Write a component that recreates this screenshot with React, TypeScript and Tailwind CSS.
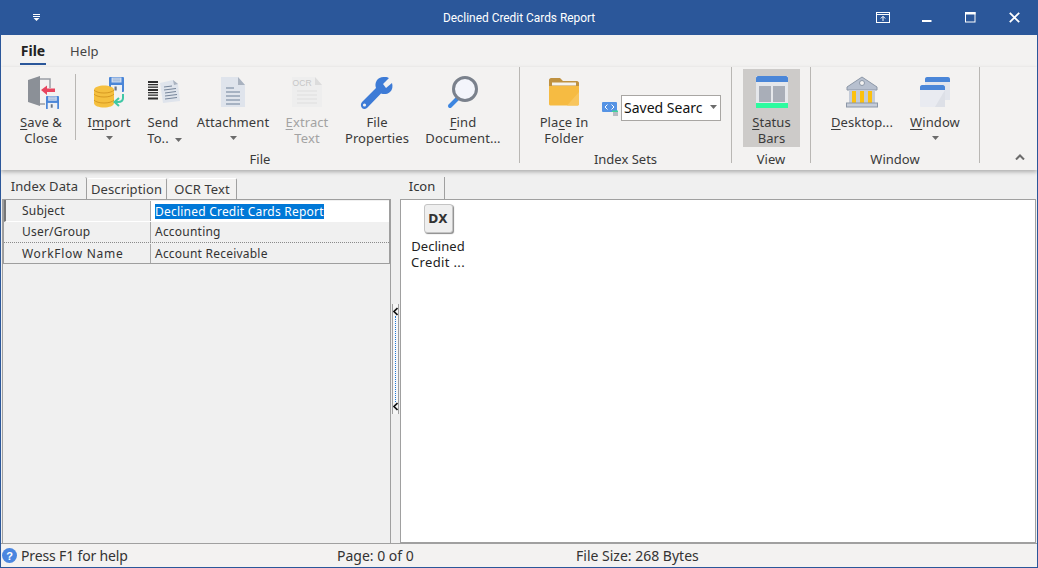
import React from "react";

const Sep = () => <div className="h-[96px] w-[1px] shrink-0 bg-[#b9b7b4]" />;

function Floppy({ x, y, s }: { x: number; y: number; s: number }) {
  const k = s / 15;
  return (
    <g transform={`translate(${x} ${y}) scale(${k})`}>
      <rect x="0" y="0" width="15" height="15" rx="1" fill="#4a86d8" />
      <rect x="2.5" y="0.5" width="10" height="5" fill="#c9d8ee" />
      <path d="M4 2 H11 M4 3.8 H11" stroke="#8ea9cf" strokeWidth="0.7" />
      <rect x="2" y="8" width="11" height="7" fill="#eef1f5" />
      <rect x="5.5" y="9.5" width="2.2" height="4" fill="#6d7683" />
    </g>
  );
}

function Icon({ name }: { name: string }) {
  const common = { width: 40, height: 40, viewBox: "0 0 40 40" };
  switch (name) {
    case "save":
      return (
        <svg {...common}>
          <path d="M7 8 L19 4 V34 L7 30 Z" fill="#8b9097" />
          <path d="M19 7 H29 V16" fill="none" stroke="#9a9ea5" strokeWidth="1.5" />
          <path d="M19 32 H24" fill="none" stroke="#9a9ea5" strokeWidth="1.5" />
          <path d="M20 18 L26 13.5 V16.5 H34 V20 H26 V23 Z" fill="#e8455f" />
          <Floppy x={25} y={24} s={13} />
        </svg>
      );
    case "import":
      return (
        <svg {...common}>
          <Floppy x={20} y={5} s={15} />
          <path d="M5 18 C5 12 25 12 25 18 V31 C25 37 5 37 5 31 Z" fill="#f5c03f" />
          <path d="M5 22 C8 26 22 26 25 22 M5 28 C8 32 22 32 25 28 M5 18 C8 22 22 22 25 18" fill="none" stroke="#d79a22" strokeWidth="1" />
          <path d="M34 22 V26 C34 29 32 30 29 30 H27" fill="none" stroke="#3fc7a5" strokeWidth="2" />
          <path d="M30 26 L25.5 30 L30 34" fill="none" stroke="#3fc7a5" strokeWidth="2" />
        </svg>
      );
    case "send":
      return (
        <svg {...common}>
          {[9, 12, 14.5, 17, 20, 22.5, 25.5].map((y, i) => (
            <rect key={i} x="5" y={y} width="10" height={i % 3 === 0 ? 2 : 1.3} fill="#2f2f2f" />
          ))}
          <path d="M17 11 L30 8 L35 12 L37 29 L20 31 Z" fill="#dfe4ec" />
          <path d="M30 8 L35 12 L31 13 Z" fill="#a9b2bf" />
          <path d="M21 15 L29 14 M21 18 L33 16.5 M22 21 L33 19.5 M22 24 L34 22.5 M22 27 L34 25.5" stroke="#76859a" strokeWidth="1" />
        </svg>
      );
    case "attach":
      return (
        <svg {...common}>
          <path d="M8 5 H25 L32 13 V35 H8 Z" fill="#dfe4ec" />
          <path d="M25 5 L32 13 H25 Z" fill="#a9b2bf" />
          <path d="M13 16 H21 M13 20 H27 M13 24 H27 M13 28 H27 M13 32 H27" stroke="#6f8097" strokeWidth="1.2" />
        </svg>
      );
    case "ocr":
      return (
        <svg {...common}>
          <path d="M5 5 H28 L35 13 V35 H5 Z" fill="#eeeeee" />
          <path d="M28 5 L35 13 H28 Z" fill="#dcdcdc" />
          <text x="5.5" y="14" fontSize="8.5" fill="#c6c6c6" fontFamily="Liberation Sans, sans-serif">OCR</text>
          <path d="M10 19 H30 M10 23 H30 M10 27 H30 M10 31 H30" stroke="#dedede" strokeWidth="1.2" />
        </svg>
      );
    case "wrench":
      return (
        <svg {...common}>
          <path d="M5 30 L19 16 C17 10 21 4 28 5 C30 5 31 5.5 32 6 L26 12 L29 16 L35 11 C36 14 35.5 18 33 20 C30 22.5 27 22.5 24 21.5 L10 36 C8 37.5 6 37 5 36 C3.5 34 3.5 32 5 30 Z" fill="#3d7bd6" />
          <circle cx="7.5" cy="33" r="1.6" fill="#f3f2f1" />
        </svg>
      );
    case "find":
      return (
        <svg {...common}>
          <path d="M14 27 L7 34" stroke="#3d86e0" strokeWidth="4" strokeLinecap="round" />
          <circle cx="22" cy="17" r="11.5" fill="#f3f5fb" stroke="#7a818c" strokeWidth="3" />
        </svg>
      );
    case "folder":
      return (
        <svg {...common}>
          <path d="M5 8 C5 7 6 6 7 6 H16 L19 9 H33 C34 9 35 10 35 11 V16 H5 Z" fill="#bf9140" />
          <rect x="8" y="10.5" width="24" height="3" fill="#f5f3ee" />
          <path d="M5 14 H35 V32 C35 33 34 33.5 33 33.5 H7 C6 33.5 5 33 5 32 Z" fill="#f6bb42" />
          <path d="M23 33.5 L35 20 V32 C35 33 34 33.5 33 33.5 Z" fill="#f8c55c" />
        </svg>
      );
    case "status":
      return (
        <svg {...common}>
          <rect x="4" y="4" width="32" height="32" fill="#e5e7eb" />
          <path d="M4 6 C4 5 5 4 6 4 H34 C35 4 36 5 36 6 V10 H4 Z" fill="#4a86d8" />
          <rect x="7" y="14" width="12" height="16" fill="#a9aeb8" />
          <rect x="21" y="14" width="12" height="16" fill="#a9aeb8" />
          <rect x="4" y="31" width="32" height="5" fill="#2dfb9f" />
        </svg>
      );
    case "desktop":
      return (
        <svg {...common}>
          <path d="M20 5 L35 15 V18 H5 V15 Z" fill="#b7c0cf" stroke="#8c97a7" strokeWidth="1" />
          <circle cx="20" cy="11" r="2.5" fill="#f3f2f1" stroke="#8c97a7" />
          <rect x="7" y="18" width="26" height="13" fill="#c5ccd8" />
          <rect x="10" y="19" width="4" height="12" fill="#fcc10f" />
          <rect x="18" y="19" width="4" height="12" fill="#fcc10f" />
          <rect x="26" y="19" width="4" height="12" fill="#fcc10f" />
          <rect x="4.5" y="31" width="31" height="4" fill="#c5ccd8" stroke="#8c97a7" strokeWidth="1" />
        </svg>
      );
    case "window":
      return (
        <svg {...common}>
          <rect x="10" y="5" width="25" height="23" fill="#e2e5ec" />
          <path d="M10 7 C10 6 11 5 12 5 H33 C34 5 35 6 35 7 V10 H10 Z" fill="#4a86d8" />
          <rect x="5" y="13" width="25" height="22" rx="1" fill="#e9ebf1" />
          <path d="M20 35 L30 18 V35 Z" fill="#dde0e7" />
          <path d="M5 15 C5 14 6 13 7 13 H28 C29 13 30 14 30 15 V18 H5 Z" fill="#4a86d8" />
        </svg>
      );
  }
  return null;
}

const Caret = () => (
  <svg width="7" height="4" viewBox="0 0 7 4" className="inline-block align-middle">
    <path d="M0 0 H7 L3.5 4 Z" fill="#6b6b6b" />
  </svg>
);

const CaretLine = () => (
  <span className="flex h-[16px] items-center">
    <Caret />
  </span>
);

function RibbonButton({
  icon,
  className,
  children,
}: {
  icon: string;
  className: string;
  children: React.ReactNode;
}) {
  return (
    <div className={`flex h-[78px] flex-col items-center pt-[3px] text-center leading-[16px] tracking-[0.1px] ${className}`}>
      <div className="mb-[2px] h-[40px] w-[40px]">
        <Icon name={icon} />
      </div>
      {children}
    </div>
  );
}

const U = ({ children }: { children: React.ReactNode }) => (
  <span className="underline underline-offset-2">{children}</span>
);

const GroupLabel = ({ children }: { children: React.ReactNode }) => (
  <div className="mt-[11px] text-center leading-[16px]">{children}</div>
);

export default function App() {
  return (
    <div className="flex h-[568px] w-[1038px] flex-col overflow-hidden border-x border-b border-[#2b579a] bg-[#f3f2f1] font-['Noto_Sans',sans-serif] text-[13px] text-[#3a3a3a]">
      {/* Title bar */}
      <div className="-mx-[1px] flex h-[35px] shrink-0 items-center bg-[#2b579a] text-white">
        <div className="flex w-[443px] pl-[33px]">
          <svg width="7" height="7" viewBox="0 0 7 7">
            <path d="M0 0.5 H7 M0 2.5 H7" stroke="#fff" strokeWidth="1" />
            <path d="M0.5 4 H6.5 L3.5 7 Z" fill="#fff" />
          </svg>
        </div>
        <div className="w-[152px] whitespace-nowrap text-center font-['Roboto',sans-serif] text-[11.9px] leading-[16px]">
          Declined Credit Cards Report
        </div>
        <div className="flex flex-1 items-center pl-[281px]">
          <svg width="14" height="11" viewBox="0 0 14 11">
            <rect x="0.5" y="0.5" width="13" height="10" fill="none" stroke="#fff" />
            <path d="M0 2.5 H14" stroke="#fff" />
            <path d="M7 9 V4.5 M4.8 6.5 L7 4.3 L9.2 6.5" fill="none" stroke="#fff" />
          </svg>
          <svg className="ml-[32px]" width="10" height="10" viewBox="0 0 10 10">
            <rect x="0" y="7" width="9.5" height="2" fill="#fff" />
          </svg>
          <svg className="ml-[33px]" width="11" height="11" viewBox="0 0 11 11">
            <rect x="0.5" y="0.5" width="9.5" height="9.5" fill="none" stroke="#fff" />
            <rect x="0" y="0" width="10.5" height="2.5" fill="#fff" />
          </svg>
          <svg className="ml-[33px]" width="11" height="11" viewBox="0 0 11 11">
            <path d="M0.8 0.8 L10.2 10.2 M10.2 0.8 L0.8 10.2" stroke="#fff" strokeWidth="1.8" />
          </svg>
        </div>
      </div>

      {/* Menu tabs */}
      <div className="flex h-[32px] shrink-0 pl-[19px] pt-[7px] leading-[18px]">
        <div className="h-[23px] w-[26px] border-b-[2px] border-[#2b579a] text-center text-[14px] font-bold text-[#222]">File</div>
        <div className="ml-[24px] text-[13px] tracking-[0.1px] text-[#444]">Help</div>
      </div>

      {/* Ribbon */}
      <div className="relative z-10 flex h-[103px] shrink-0 bg-[#f3f2f1] shadow-[0_2px_4px_rgba(0,0,0,0.28)]">
        {/* File group */}
        <div className="flex h-[96px] w-[518px] flex-col">
          <div className="flex h-[73px] pl-[15px] pt-[2px]">
            <RibbonButton icon="save" className="w-[50px]">
              <span><U>S</U>ave &amp;</span>
              <span>Close</span>
            </RibbonButton>
            <div className="ml-[9px] mr-[8px] mt-[5px] h-[66px] w-[1px] bg-[#b9b7b4]" />
            <RibbonButton icon="import" className="w-[50px]">
              <span>I<U>m</U>port</span>
              <CaretLine />
            </RibbonButton>
            <RibbonButton icon="send" className="w-[58px]">
              <span>Send</span>
              <span className="pl-[3px]">To..<span className="ml-[6px]"><Caret /></span></span>
            </RibbonButton>
            <RibbonButton icon="attach" className="w-[82px]">
              <span>Attachment</span>
              <CaretLine />
            </RibbonButton>
            <RibbonButton icon="ocr" className="w-[66px] text-[#a3a3a3]">
              <span><U>E</U>xtract</span>
              <span>Text</span>
            </RibbonButton>
            <RibbonButton icon="wrench" className="w-[74px]">
              <span>File</span>
              <span>Properties</span>
            </RibbonButton>
            <RibbonButton icon="find" className="w-[98px]">
              <span><U>F</U>ind</span>
              <span>Document...</span>
            </RibbonButton>
          </div>
          <GroupLabel>File</GroupLabel>
        </div>
        <Sep />

        {/* Index sets */}
        <div className="flex h-[96px] w-[211px] flex-col">
          <div className="flex h-[73px] pl-[4px] pt-[2px]">
            <RibbonButton icon="folder" className="w-[80px]">
              <span>Pla<U>c</U>e In</span>
              <span>Folder</span>
            </RibbonButton>
            <div className="-ml-[2px] mt-[26px] flex h-[26px] items-center">
              <svg width="17" height="15" viewBox="0 0 17 15">
                <rect x="0" y="1" width="15" height="10" rx="1" fill="#5593e4" />
                <path d="M5.5 3.5 L3 6 L5.5 8.5 M9.5 3.5 L12 6 L9.5 8.5" fill="none" stroke="#fff" strokeWidth="1" />
                <rect x="10" y="9.5" width="6" height="1.5" fill="#3fd29b" />
                <rect x="11" y="11" width="5" height="4" fill="#b9bcc2" />
              </svg>
              <div className="ml-[2px] flex h-[26px] w-[100px] items-center border border-[#a8a6a3] bg-white pb-[2px] pl-[2px] text-[14px] text-[#111]">
                <span className="w-[83px] whitespace-nowrap">Saved Searc</span>
                <span className="ml-[3px] flex"><Caret /></span>
              </div>
            </div>
          </div>
          <GroupLabel>Index Sets</GroupLabel>
        </div>
        <Sep />

        {/* View */}
        <div className="flex h-[96px] w-[78px] flex-col">
          <div className="flex h-[73px] pl-[11px] pt-[2px]">
            <RibbonButton icon="status" className="w-[57px] bg-[#cdcbc9]">
              <span><U>S</U>tatus</span>
              <span>Bars</span>
            </RibbonButton>
          </div>
          <GroupLabel>View</GroupLabel>
        </div>
        <Sep />

        {/* Window */}
        <div className="flex h-[96px] w-[168px] flex-col">
          <div className="flex h-[73px] pl-[15px] pt-[2px]">
            <RibbonButton icon="desktop" className="w-[72px]">
              <span><U>D</U>esktop...</span>
            </RibbonButton>
            <RibbonButton icon="window" className="w-[74px]">
              <span><U>W</U>indow</span>
              <CaretLine />
            </RibbonButton>
          </div>
          <GroupLabel>Window</GroupLabel>
        </div>
        <Sep />

        <div className="flex h-[96px] flex-1 items-end justify-end pb-[3px] pr-[12px]">
          <svg width="10" height="6" viewBox="0 0 10 6">
            <path d="M1 5.5 L5 1.5 L9 5.5" fill="none" stroke="#6b6b6b" strokeWidth="2" />
          </svg>
        </div>
      </div>

      {/* Body */}
      <div className="flex min-h-0 flex-1 bg-[#f0f0f0] pt-[7px]">
        {/* Left panel */}
        <div className="ml-[1px] flex w-[389px] flex-col">
          <div className="flex h-[22px] items-end pl-[1px] leading-[16px] tracking-[0.1px]">
            <div className="flex h-[22px] w-[84px] items-center justify-center rounded-t-[2px] border-r border-[#a0a0a0] bg-[#f0f0f0] pb-[4px]">Index Data</div>
            <div className="flex h-[21px] w-[80px] items-center justify-center rounded-t-[2px] border-r border-t border-[#ffffff] border-r-[#a0a0a0] bg-[#f3f2f1] pb-[1px]">Description</div>
            <div className="ml-[1px] flex h-[21px] w-[69px] items-center justify-center rounded-t-[2px] border-r border-t border-[#ffffff] border-r-[#a0a0a0] bg-[#f3f2f1] pb-[1px]">OCR Text</div>
          </div>
          <div className="flex-1 border-x border-[#a0a0a0] text-[12px] tracking-[0.22px] text-[#333]">
            <div className="border border-[#9e9e9e]">
              <div className="flex h-[22px] border-b border-l-[2px] border-b-white border-l-[#777] pt-[1px]">
                <div className="flex w-[145px] items-center border-r border-[#a8a8a8] pl-[16px]">Subject</div>
                <div className="flex flex-1 items-center bg-white pl-[4px]">
                  <span className="bg-[#0078d7] leading-[15px] text-white">Declined Credit Cards Report</span>
                </div>
              </div>
              <div className="flex h-[21px] border-b border-dotted border-[#8a8a8a] pl-[2px]">
                <div className="flex w-[145px] items-center border-r border-[#a8a8a8] pl-[16px]">User/Group</div>
                <div className="flex flex-1 items-center pl-[4px]">Accounting</div>
              </div>
              <div className="flex h-[20px] pl-[2px] pt-[1px]">
                <div className="flex w-[145px] items-center border-r border-[#a8a8a8] pl-[16px] tracking-[0.7px]">WorkFlow Name</div>
                <div className="flex flex-1 items-center pl-[4px]">Account Receivable</div>
              </div>
            </div>
          </div>
        </div>

        {/* Splitter */}
        <div className="flex w-[9px] items-start pl-[1px] pt-[127px]">
          <div className="flex h-[110px] w-[7px] flex-col items-center justify-between border-x border-[#a0a0a0] bg-[#f7f7f7] py-[3px]">
            <svg className="shrink-0" width="5" height="9" viewBox="0 0 5 9"><path d="M4.5 1 L1 4.5 L4.5 8" fill="none" stroke="#111" strokeWidth="1.6" /></svg>
            <div className="flex-1 border-l-[1px] border-dotted border-[#1f78d8]" />
            <svg className="shrink-0" width="5" height="9" viewBox="0 0 5 9"><path d="M4.5 1 L1 4.5 L4.5 8" fill="none" stroke="#111" strokeWidth="1.6" /></svg>
          </div>
        </div>

        {/* Right panel */}
        <div className="flex flex-1 flex-col pr-[1px]">
          <div className="flex h-[22px] items-end">
            <div className="flex h-[22px] w-[45px] items-center justify-center border-r border-[#a0a0a0] bg-[#f0f0f0] pb-[2px] text-[#333]">Icon</div>
          </div>
          <div className="flex-1 border border-[#a0a0a0] bg-white pl-[9px] pt-[4px]">
            <div className="flex w-[56px] flex-col items-center text-[13px] leading-[16px] tracking-[0.05px] text-[#222]">
              <div className="flex h-[29px] w-[29px] items-center justify-center rounded-[3px] border border-[#c4c4c4] bg-[#efefef] font-['DejaVu_Sans',sans-serif] text-[12px] font-bold text-[#333] shadow-[1px_1px_1px_#8a8a8a]">DX</div>
              <div className="mt-[5px]">Declined</div>
              <div className="tracking-[0.35px]">Credit ...</div>
            </div>
          </div>
        </div>
      </div>

      {/* Status bar */}
      <div className="flex h-[24px] shrink-0 items-center border-t border-[#a0a0a0] bg-[#f3f2f1] pl-[1px] text-[14px] text-[#333]">
        <svg width="15" height="15" viewBox="0 0 15 15">
          <circle cx="7.5" cy="7.5" r="7.5" fill="#4a86e0" />
          <text x="7.5" y="11.5" textAnchor="middle" fontSize="11" fontWeight="bold" fill="#fff" fontFamily="Liberation Sans, sans-serif">?</text>
        </svg>
        <div className="ml-[4px] w-[316px] tracking-[-0.15px]">Press F1 for help</div>
        <div className="w-[239px]">Page: 0 of 0</div>
        <div>File Size: 268 Bytes</div>
      </div>
    </div>
  );
}
